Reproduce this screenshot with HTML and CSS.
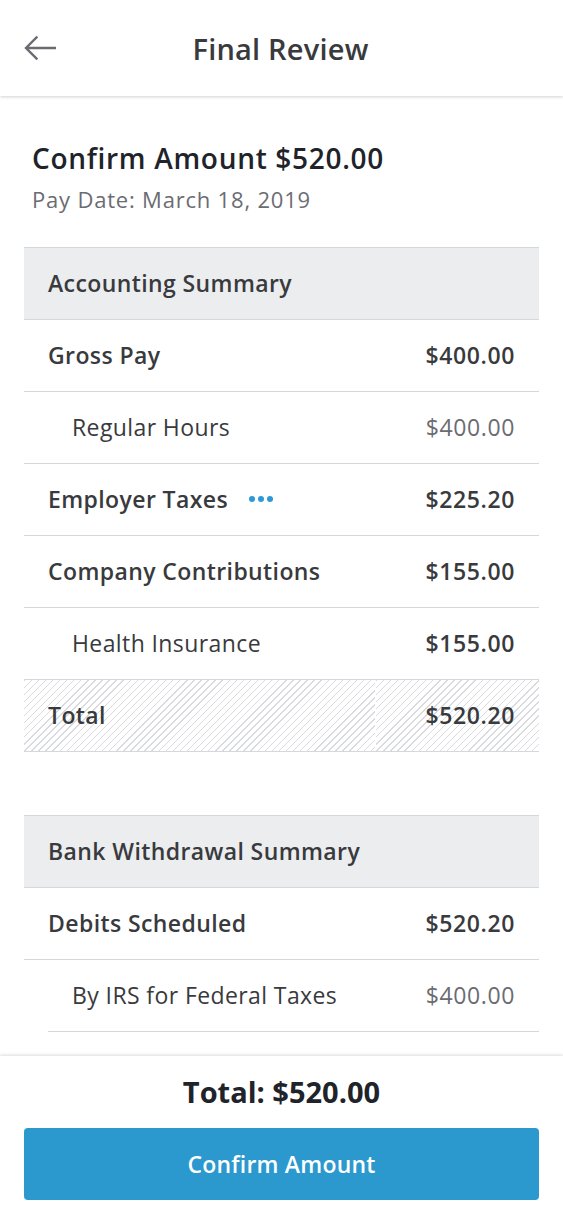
FILE: index.html
```html
<!DOCTYPE html>
<html lang="en">
<head>
<meta charset="utf-8">
<title>Final Review</title>
<link rel="stylesheet" href="styles.css">
</head>
<body>
<header class="topbar">
  <button class="back" aria-label="Back">
    <svg width="32" height="26" viewBox="0 0 32 26"><path d="M31 13H3M12.5 2.5L2 13l10.5 10.5" fill="none" stroke="#6B6C72" stroke-width="2.4" stroke-linecap="square"/></svg>
  </button>
  <h1 class="topbar-title">Final Review</h1>
</header>

<main class="page">
  <section class="intro">
    <h2 class="intro-title">Confirm Amount $520.00</h2>
    <p class="intro-date">Pay Date: March 18, 2019</p>
  </section>

  <section class="table">
    <div class="row head"><span class="label strong">Accounting Summary</span></div>
    <div class="row"><span class="label strong">Gross Pay</span><span class="value strong">$400.00</span></div>
    <div class="row child"><span class="label">Regular Hours</span><span class="value muted">$400.00</span></div>
    <div class="row"><span class="label strong">Employer Taxes <span class="dots"><i></i><i></i><i></i></span></span><span class="value strong">$225.20</span></div>
    <div class="row"><span class="label strong">Company Contributions</span><span class="value strong">$155.00</span></div>
    <div class="row child"><span class="label">Health Insurance</span><span class="value strong">$155.00</span></div>
    <div class="row total">
      <div class="cell cell-left"><span class="label strong">Total</span></div>
      <div class="cell cell-right"><span class="value strong">$520.20</span></div>
    </div>
  </section>

  <section class="table second">
    <div class="row head"><span class="label strong">Bank Withdrawal Summary</span></div>
    <div class="row"><span class="label strong">Debits Scheduled</span><span class="value strong">$520.20</span></div>
    <div class="row child indent-line"><span class="label">By IRS for Federal Taxes</span><span class="value muted">$400.00</span></div>
  </section>
</main>

<footer class="footer">
  <div class="footer-total">Total: $520.00</div>
  <button class="confirm">Confirm Amount</button>
</footer>
</body>
</html>
```

FILE: styles.css
```css
* { box-sizing: border-box; }
html, body { margin: 0; padding: 0; }
body {
  font-family: "Open Sans", "Liberation Sans", sans-serif;
  color: #393A3D;
  background: #fff;
  width: 563px;
  height: 1219px;
  overflow: hidden;
  position: relative;
}
.topbar {
  height: 96px;
  display: flex;
  align-items: center;
  justify-content: center;
  position: relative;
  background: #fff;
  box-shadow: 0 1px 3px rgba(0,0,0,0.18);
  z-index: 2;
}
.back {
  position: absolute;
  left: 24px;
  top: 35px;
  border: 0;
  background: none;
  padding: 0;
  width: 32px;
  height: 26px;
}
.back svg { display: block; }
.topbar-title {
  margin: 0;
  font-size: 29px;
  font-weight: 600;
  color: #393A3D;
  letter-spacing: 0.2px;
  line-height: 36px;
  position: relative;
  top: 1px;
  left: -1px;
}
.page { padding: 0 24px; }
.intro { padding: 44px 8px 34px; }
.intro-title {
  margin: 0;
  font-size: 28px;
  font-weight: 600;
  line-height: 36px;
  color: #21232A;
  letter-spacing: 0.7px;
}
.intro-date {
  margin: 9px 0 0;
  font-size: 22px;
  line-height: 28px;
  color: #6B6C72;
  letter-spacing: 0.8px;
}
.table { border-top: 1px solid #D4D7DC; }
.table.second { margin-top: 63px; }
.row {
  height: 72px;
  display: flex;
  align-items: center;
  justify-content: space-between;
  padding: 0 24px;
  border-bottom: 1px solid #D4D7DC;
  font-size: 23px;
  line-height: 30px;
  letter-spacing: 0.4px;
}
.row > span, .cell > span { position: relative; top: -1px; }
.row.head { background: #ECEDEF; }
.row.child { padding-left: 48px; }
.row.indent-line { border-bottom: 0; position: relative; }
.row.indent-line::after {
  content: "";
  position: absolute;
  left: 24px; right: 0; bottom: 0;
  border-bottom: 1px solid #D4D7DC;
}
.label { display: flex; align-items: center; }
.strong { font-weight: 600; }
.value { letter-spacing: 0.6px; }
.value.muted { color: #6B6C72; }
.dots { display: inline-flex; gap: 3px; margin-left: 21px; }
.dots i { width: 6px; height: 6px; border-radius: 50%; background: #2D9AD7; display: block; }
.row.total { padding: 0; gap: 1px; }
.cell {
  height: 100%;
  display: flex;
  align-items: center;
  background: repeating-linear-gradient(135deg, #D8DADE 0 1px, #fff 1px 5px);
}
.cell-left { flex: 0 0 351px; padding-left: 24px; }
.cell-right { flex: 1; justify-content: flex-end; padding-right: 24px; }
.footer {
  position: absolute;
  left: 0; right: 0; bottom: 0;
  height: 163px;
  background: #fff;
  box-shadow: 0 -1px 3px rgba(0,0,0,0.15);
  padding: 16px 24px 19px;
  display: flex;
  flex-direction: column;
  align-items: center;
  z-index: 3;
}
.footer-total {
  font-size: 29px;
  font-weight: 700;
  line-height: 40px;
  color: #21232A;
  margin-bottom: 16px;
}
.confirm {
  width: 100%;
  height: 72px;
  border: 0;
  border-radius: 4px;
  background: #2B98CE;
  color: #fff;
  font-family: inherit;
  font-size: 23px;
  font-weight: 600;
  letter-spacing: 0.2px;
}
```
